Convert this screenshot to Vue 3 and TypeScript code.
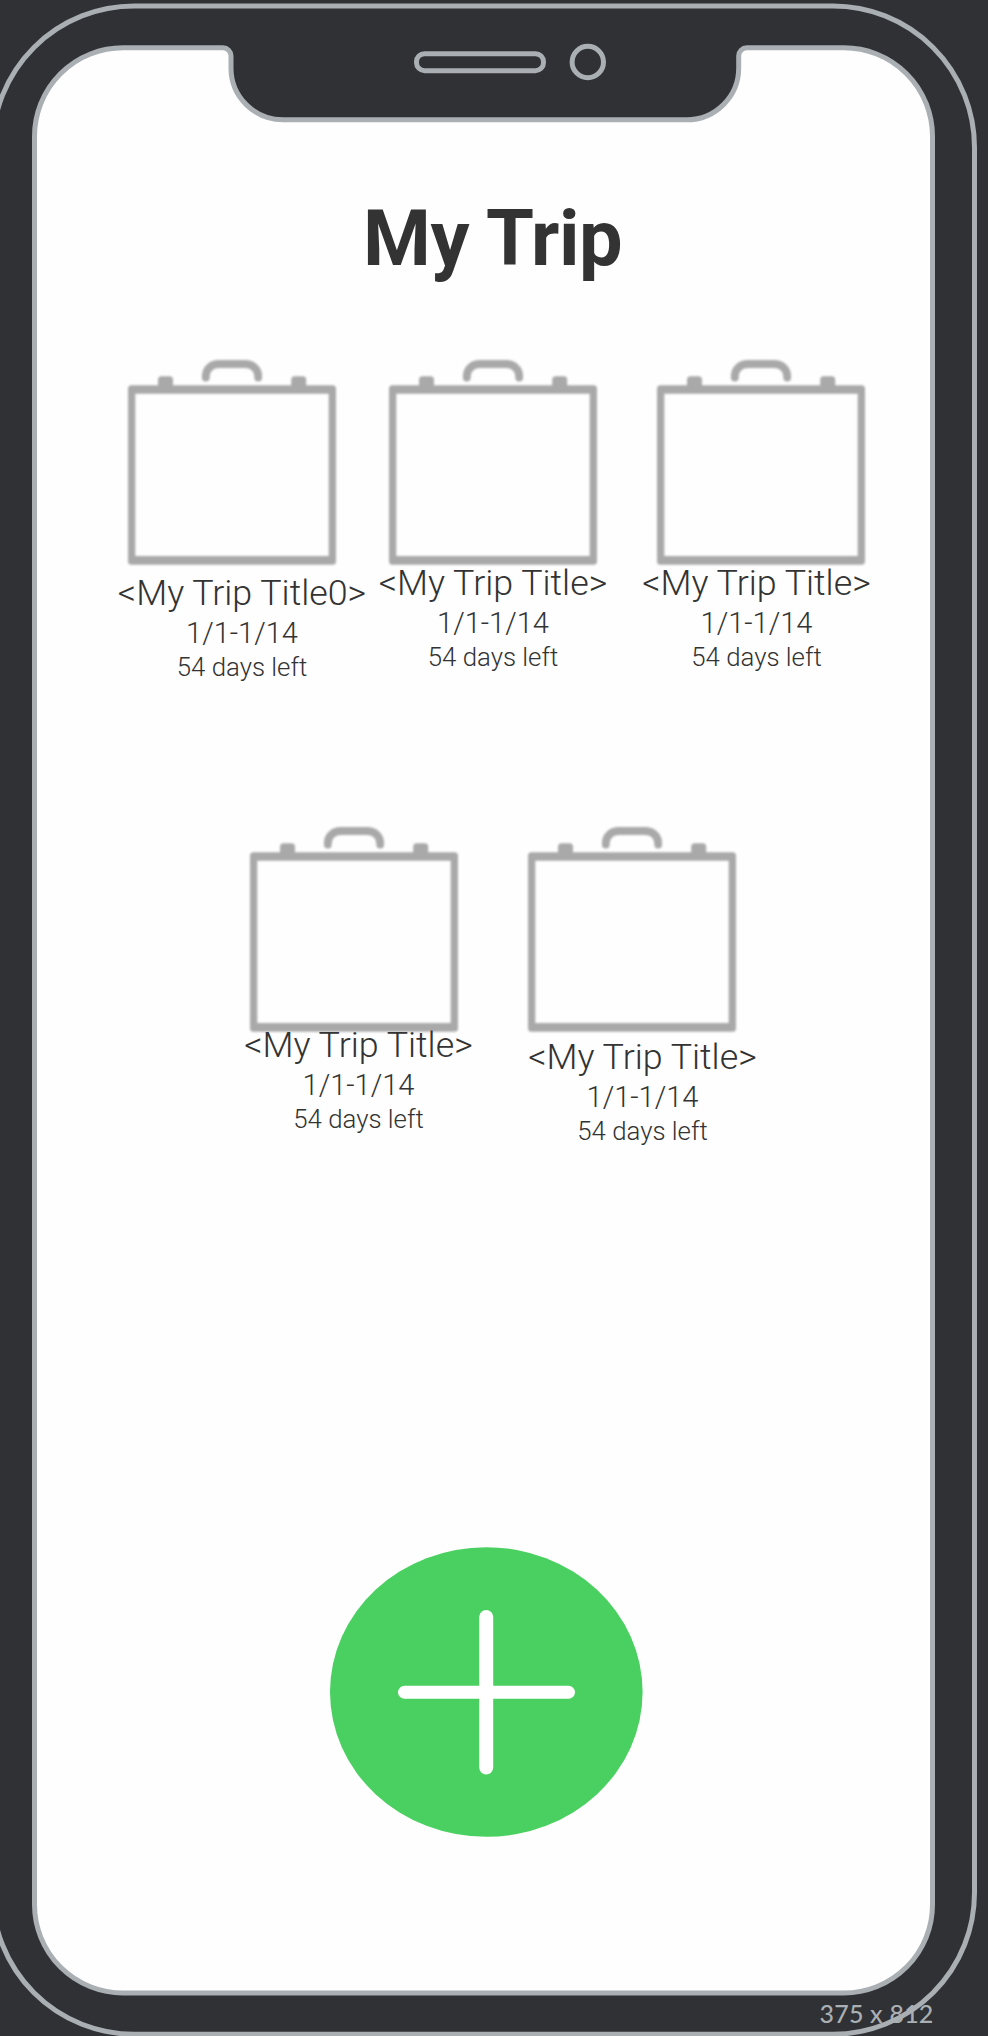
<script setup lang="ts">
interface Trip {
  id: number
  title: string
  dates: string
  left: string
}

const makeTrip = (id: number, title = '<My Trip Title>'): Trip => ({
  id,
  title,
  dates: '1/1-1/14',
  left: '54 days left',
})

const rows: Trip[][] = [
  [makeTrip(1, '<My Trip Title0>'), makeTrip(2), makeTrip(3)],
  [makeTrip(4), makeTrip(5)],
]
</script>

<template>
  <div class="stage">
    <svg class="device" viewBox="0 0 988 2036" width="988" height="2036" aria-hidden="true">
      <rect class="line" x="-7.5" y="6" width="982" height="2028.2" rx="141.5" />
      <path
        class="line screen-shape"
        d="M123 47.8H223A8 8 0 0 1 231 55.8V68A52 51.8 0 0 0 283 119.8H686.7A52 51.8 0 0 0 738.7 68V55.8A8 8 0 0 1 746.7 47.8H844A88.5 88.5 0 0 1 932.5 136.3V1904.5A88.5 88.5 0 0 1 844 1993H123A88.5 88.5 0 0 1 34.5 1904.5V136.3A88.5 88.5 0 0 1 123 47.8Z"
      />
      <rect class="line" x="416.5" y="53.7" width="127" height="17" rx="8" />
      <circle class="line" cx="587.8" cy="62" r="15.7" />
    </svg>

    <main class="content">
      <h1 class="heading">My Trip</h1>

      <section v-for="(row, r) in rows" :key="r" class="row" :class="`row-${r + 1}`">
        <article v-for="trip in row" :key="trip.id" class="trip" :class="`trip-${trip.id}`">
          <svg class="case" viewBox="0 0 208 206" width="208" height="206" aria-hidden="true">
            <path class="handle" d="M77.8 18.5V17.5C77.8 9.5 84 5 91 5H117C124 5 130.2 9.5 130.2 17.5V18.5" />
            <rect x="30" y="17.3" width="15" height="14" rx="3.5" />
            <rect x="163.2" y="17.3" width="15" height="14" rx="3.5" />
            <path
              fill-rule="evenodd"
              d="M3.5 26.3H204.5Q208 26.3 208 29.8V202.2Q208 205.7 204.5 205.7H3.5Q0 205.7 0 202.2V29.8Q0 26.3 3.5 26.3ZM7.3 34.7V197H200.7V34.7Z"
            />
          </svg>
          <div class="caption">
            <div class="title">{{ trip.title }}</div>
            <div class="dates">{{ trip.dates }}</div>
            <div class="left">{{ trip.left }}</div>
          </div>
        </article>
      </section>

      <button class="add" type="button" aria-label="Add trip">
        <svg viewBox="0 0 313 290" width="313" height="290" aria-hidden="true">
          <ellipse cx="156.3" cy="145" rx="156.3" ry="144.8" fill="#4ad060" />
          <rect x="149.2" y="63" width="14" height="164.6" rx="7" fill="#fff" />
          <rect x="68" y="138.8" width="177" height="12.9" rx="6.5" fill="#fff" />
        </svg>
      </button>
    </main>

    <div class="size">375 x 812</div>
  </div>
</template>

<style>
body {
  background: #303135;
}
</style>

<style scoped>
.stage {
  position: relative;
  width: 988px;
  height: 2036px;
  overflow: hidden;
  background: #303135;
  color: #333;
  font-family: Roboto, 'Liberation Sans', sans-serif;
}

.device {
  position: absolute;
  inset: 0;
}

.line {
  fill: none;
  stroke: #a9afb2;
  stroke-width: 5;
}

.screen-shape {
  fill: #fefefe;
}

.content {
  position: relative;
  box-sizing: border-box;
  height: 2036px;
  padding-top: 193px;
}

.heading {
  margin: 0 0 0 363px;
  height: 166px;
  font-size: 77.5px;
  line-height: 91px;
  font-weight: 700;
  letter-spacing: -0.4px;
  white-space: nowrap;
}

.row {
  display: flex;
  height: 467px;
}

.row-1 {
  padding-left: 128px;
}

.row-2 {
  padding-left: 250px;
}

.trip {
  display: flex;
  flex-direction: column;
  align-items: center;
  width: 208px;
}

.trip-2 {
  margin-left: 53px;
}

.trip-3 {
  margin-left: 60px;
}

.trip-5 {
  margin-left: 70px;
}

.case {
  flex: none;
  fill: #a9a9a9;
  filter: blur(0.8px);
}

.handle {
  fill: none;
  stroke: #a9a9a9;
  stroke-width: 7.8;
  stroke-linecap: round;
}

.caption {
  position: relative;
  margin-top: 7px;
  text-align: center;
  white-space: nowrap;
  font-weight: 300;
}

.trip-1 .caption {
  left: 10px;
}

.trip-2 .caption {
  margin-top: -3px;
}

.trip-3 .caption {
  left: -4.5px;
  margin-top: -3px;
}

.trip-4 .caption {
  left: 4.5px;
  margin-top: -11px;
}

.trip-4 .caption,
.trip-5 .caption {
  padding-top: 3px;
}

.trip-5 .caption {
  left: 10.5px;
  margin-top: 1px;
}

.title {
  font-size: 35.8px;
  line-height: 42px;
}

.dates {
  font-size: 29px;
  line-height: 38px;
}

.left {
  font-size: 25.8px;
  line-height: 30px;
}

.add {
  display: block;
  margin: 254px 0 0 330px;
  padding: 0;
  border: 0;
  background: none;
  line-height: 0;
}

.size {
  position: absolute;
  left: 819.5px;
  top: 1998px;
  color: #a9afb2;
  font: 500 25px/30px Lato, sans-serif;
  letter-spacing: 0.2px;
  white-space: nowrap;
}
</style>
